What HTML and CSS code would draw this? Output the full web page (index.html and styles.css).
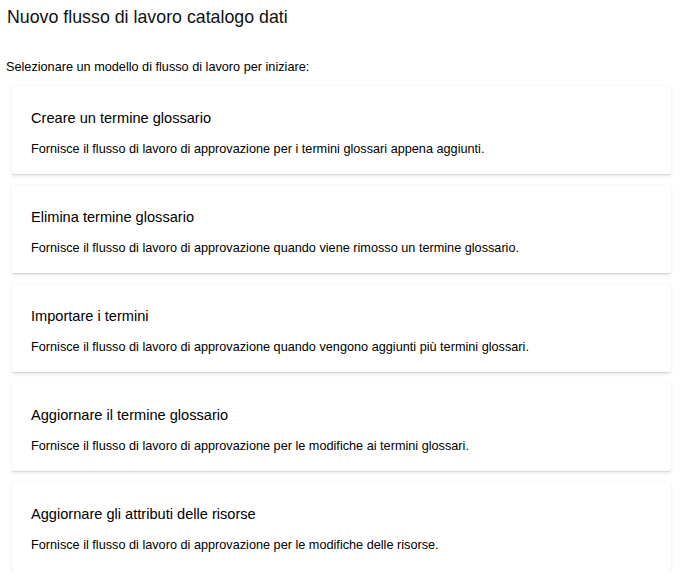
FILE: index.html
```html
<!DOCTYPE html>
<html lang="it">
<head>
<meta charset="utf-8">
<link rel="stylesheet" href="styles.css">
</head>
<body>
<div class="page">
  <h1 class="title">Nuovo flusso di lavoro catalogo dati</h1>
  <p class="intro">Selezionare un modello di flusso di lavoro per iniziare:</p>
  <div class="list">
    <div class="card">
      <div class="card-title">Creare un termine glossario</div>
      <div class="card-desc">Fornisce il flusso di lavoro di approvazione per i termini glossari appena aggiunti.</div>
    </div>
    <div class="card">
      <div class="card-title">Elimina termine glossario</div>
      <div class="card-desc">Fornisce il flusso di lavoro di approvazione quando viene rimosso un termine glossario.</div>
    </div>
    <div class="card">
      <div class="card-title">Importare i termini</div>
      <div class="card-desc">Fornisce il flusso di lavoro di approvazione quando vengono aggiunti più termini glossari.</div>
    </div>
    <div class="card">
      <div class="card-title">Aggiornare il termine glossario</div>
      <div class="card-desc">Fornisce il flusso di lavoro di approvazione per le modifiche ai termini glossari.</div>
    </div>
    <div class="card">
      <div class="card-title">Aggiornare gli attributi delle risorse</div>
      <div class="card-desc">Fornisce il flusso di lavoro di approvazione per le modifiche delle risorse.</div>
    </div>
  </div>
</div>
</body>
</html>
```
FILE: styles.css
```css
html, body {
  margin: 0;
  padding: 0;
  background: #ffffff;
}
body {
  font-family: "Liberation Sans", Arial, sans-serif;
  color: #000000;
}
.page {
  padding: 0 14px 0 6px;
}
.title {
  margin: 0;
  padding: 6px 0 0 1px;
  font-size: 17.8px;
  font-weight: 400;
  line-height: 22px;
  color: #111111;
}
.intro {
  margin: 31px 0 0 0;
  font-size: 12.7px;
  line-height: 16px;
}
.list {
  display: flex;
  flex-direction: column;
  gap: 11px;
  margin: 11px 0 0 6px;
}
.card {
  background: #ffffff;
  border-radius: 2px;
  box-shadow: 0 1.6px 3.6px rgba(0,0,0,0.10), 0 0.3px 0.9px rgba(0,0,0,0.08);
  padding: 22px 19px 17px 19px;
  height: 88px;
  box-sizing: border-box;
}
.card-title {
  font-size: 14.6px;
  line-height: 20px;
}
.card-desc {
  margin-top: 13px;
  font-size: 12.7px;
  line-height: 16px;
}
```
